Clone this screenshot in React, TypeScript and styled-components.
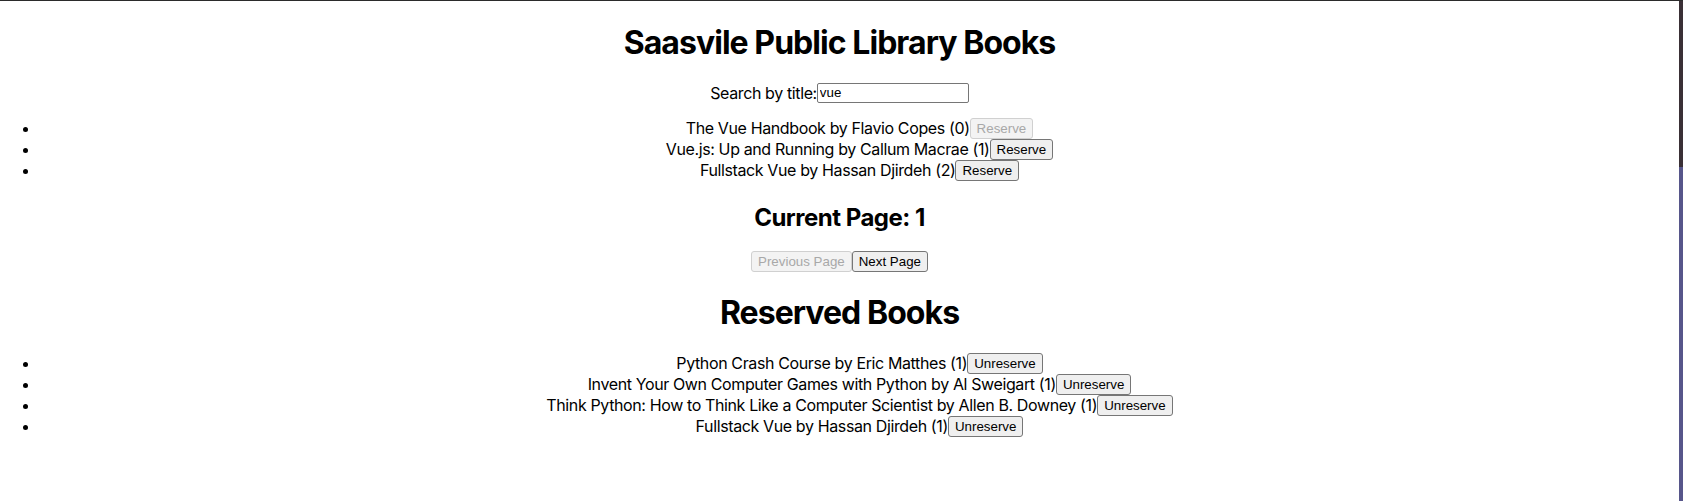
import React from 'react';
import styled, { createGlobalStyle } from 'styled-components';

interface Book {
  title: string;
  author: string;
  copies: number;
}

const books: Book[] = [
  { title: 'The Vue Handbook', author: 'Flavio Copes', copies: 0 },
  { title: 'Vue.js: Up and Running', author: 'Callum Macrae', copies: 1 },
  { title: 'Fullstack Vue', author: 'Hassan Djirdeh', copies: 2 },
];

const reserved: Book[] = [
  { title: 'Python Crash Course', author: 'Eric Matthes', copies: 1 },
  { title: 'Invent Your Own Computer Games with Python', author: 'Al Sweigart', copies: 1 },
  { title: 'Think Python: How to Think Like a Computer Scientist', author: 'Allen B. Downey', copies: 1 },
  { title: 'Fullstack Vue', author: 'Hassan Djirdeh', copies: 1 },
];

const GlobalStyle = createGlobalStyle`
  html, body {
    margin: 0;
    background: #3a3036;
  }
`;

const App = () => {
  return (
    <>
      <GlobalStyle />
      <Frame>
        <Page>
          <Title>Saasvile Public Library Books</Title>
          <SearchRow>
            <label htmlFor="search">Search by title:</label>
            <SearchInput id="search" type="text" defaultValue="vue" />
          </SearchRow>
          <BookList>
            {books.map((book) => (
              <BookItem key={book.title}>
                {book.title} by {book.author} ({book.copies})
                <ActionButton disabled={book.copies === 0}>Reserve</ActionButton>
              </BookItem>
            ))}
          </BookList>
          <PageTitle>Current Page: 1</PageTitle>
          <Pager>
            <ActionButton disabled>Previous Page</ActionButton>
            <ActionButton>Next Page</ActionButton>
          </Pager>
          <Title>Reserved Books</Title>
          <BookList>
            {reserved.map((book) => (
              <BookItem key={book.title}>
                {book.title} by {book.author} ({book.copies})
                <ActionButton>Unreserve</ActionButton>
              </BookItem>
            ))}
          </BookList>
        </Page>
        <Edge />
      </Frame>
    </>
  );
};

export default App;

const Frame = styled.div`
  display: flex;
  min-height: 100vh;
  box-sizing: border-box;
  border-top: 1px solid #2b2b2b;
`;

const Page = styled.div`
  flex: 1;
  background: #ffffff;
  color: #000000;
  text-align: center;
  font-family: Inter, 'Noto Sans', sans-serif;
  font-size: 16px;
  letter-spacing: -0.38px;
`;

// desktop peeking out at the right of the window
const Edge = styled.div`
  width: 4px;
  background: linear-gradient(to bottom, #3a3036 0, #3a3036 166px, #57568a 166px, #57568a 100%);
`;

const Title = styled.h1`
  margin: 21.6px 0 20.5px;
  font-size: 32px;
  font-weight: 700;
  letter-spacing: -0.95px;
`;

const SearchRow = styled.div`
  display: flex;
  align-items: center;
  justify-content: center;
  height: 21px;
`;

const SearchInput = styled.input`
  box-sizing: border-box;
  width: 152px;
  height: 20px;
  margin: 0;
  padding: 1px 2px;
  border: 1px solid #767676;
  border-radius: 2px;
  font-family: 'Liberation Sans', Arial, sans-serif;
  font-size: 13.33px;
  color: #000000;
`;

const BookList = styled.ul`
  margin: 15px 0 16px;
  padding-left: 40px;
  list-style: disc;
`;

const BookItem = styled.li`
  height: 21px;
  line-height: 21px;
`;

const ActionButton = styled.button`
  box-sizing: border-box;
  height: 21px;
  margin: 0;
  padding: 1px 6px;
  border: 1px solid #767676;
  border-radius: 3px;
  background: #efefef;
  color: #000000;
  font-family: 'Liberation Sans', Arial, sans-serif;
  font-size: 13.33px;
  line-height: 15px;
  letter-spacing: 0;
  vertical-align: top;

  &:disabled {
    border-color: #d0d0d0;
    background: #f3f3f3;
    color: #a8a8a8;
  }
`;

const PageTitle = styled.h2`
  margin: 21.6px 0 19px;
  font-size: 24px;
  font-weight: 700;
  letter-spacing: -0.5px;
`;

const Pager = styled.div`
  height: 21px;
  line-height: 21px;
`;
